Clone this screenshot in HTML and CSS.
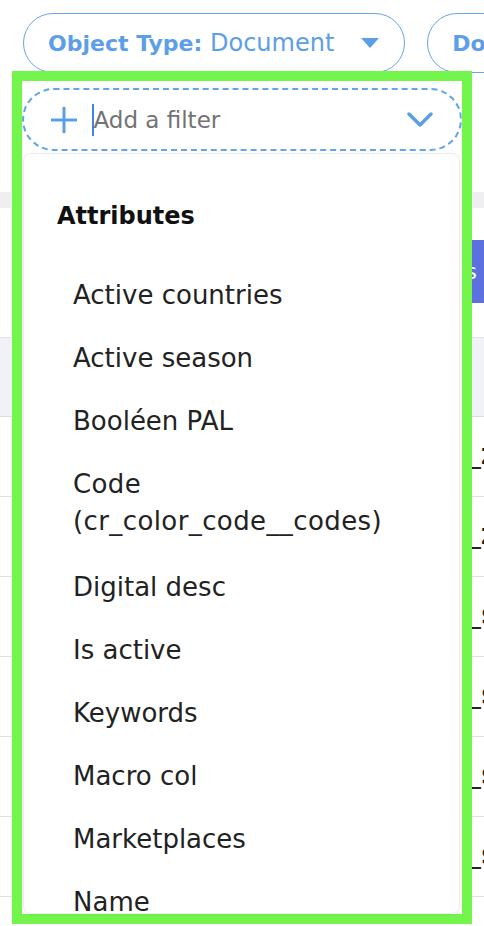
FILE: index.html
```html
<!DOCTYPE html>
<html lang="en">
<head>
  <meta charset="UTF-8">
  <title>Filters</title>
  <meta name="viewport" content="width=device-width, initial-scale=1.0">
  <link rel="stylesheet" href="styles.css">
</head>
<body>

<!-- Page behind the picker -->
<div class="page">
  <div class="filters">
    <div class="pill">
      <b>Object Type:</b>&nbsp;<span>Document</span>
      <span class="caret"></span>
    </div>
    <div class="pill">
      <b>Document status:</b>&nbsp;<span>All</span>
    </div>
  </div>

  <div class="band"></div>

  <div class="actions">
    <button class="action-btn">Columns</button>
  </div>

  <div class="table">
    <div class="table-head"></div>
    <div class="row"><span class="cell">_Z</span></div>
    <div class="row"><span class="cell">_Z</span></div>
    <div class="row"><span class="cell">_S</span></div>
    <div class="row"><span class="cell">_S</span></div>
    <div class="row"><span class="cell">_S</span></div>
    <div class="row"><span class="cell">_S</span></div>
  </div>
</div>

<!-- Add filter picker -->
<div class="picker">
  <div class="filter-input">
    <svg class="plus" width="28" height="28" viewBox="0 0 28 28">
      <path d="M14 1v26M1 14h26" stroke="#5b9de7" stroke-width="3" fill="none"/>
    </svg>
    <span class="cursor"></span>
    <span class="placeholder">Add a filter</span>
    <svg class="chevron" width="26" height="16" viewBox="0 0 26 16">
      <path d="M2 2l11 11L24 2" stroke="#5b9de7" stroke-width="3.4" fill="none" stroke-linecap="round" stroke-linejoin="round"/>
    </svg>
  </div>

  <div class="menu">
    <h3>Attributes</h3>
    <ul class="options">
      <li>Active countries</li>
      <li>Active season</li>
      <li>Booléen PAL</li>
      <li class="code">Code (cr_color_code__codes)</li>
      <li>Digital desc</li>
      <li>Is active</li>
      <li>Keywords</li>
      <li>Macro col</li>
      <li>Marketplaces</li>
      <li>Name</li>
      <li>Season</li>
    </ul>
  </div>
</div>

</body>
</html>
```

FILE: styles.css
```css
/* Base */
body {
  margin: 0;
  width: 484px;
  height: 926px;
  overflow: hidden;
  background: #fff;
  font-family: 'DejaVu Sans', sans-serif;
  color: #222;
  position: relative;
}

/* Filter pills */
.filters {
  display: flex;
  gap: 22px;
  padding: 13px 0 0 23px;
  white-space: nowrap;
}
.pill {
  flex-shrink: 0;
  box-sizing: border-box;
  height: 60px;
  border: 1.5px solid #66a5ea;
  border-radius: 30px;
  display: flex;
  align-items: center;
  padding: 0 25px 0 24px;
  color: #5c9ee7;
  font-size: 24px;
}
.pill b {
  font-size: 22px;
}
.caret {
  width: 0;
  height: 0;
  margin-left: 27px;
  border-left: 9px solid transparent;
  border-right: 9px solid transparent;
  border-top: 10px solid #5c9ee7;
}

/* Background content */
.band {
  height: 16px;
  margin-top: 119px;
  background: #efeff1;
}
.actions {
  display: flex;
  justify-content: flex-end;
  margin-top: 32px;
}
.action-btn {
  height: 63px;
  border: none;
  background: #5c70df;
  color: #fff;
  font-family: inherit;
  font-size: 22px;
  padding: 0 7px 0 20px;
}
.table {
  margin-top: 34px;
}
.table-head {
  height: 80px;
  box-sizing: border-box;
  background: #f1f2f7;
  border-top: 1px solid #e2e2e4;
  border-bottom: 1px solid #dcdcde;
}
.row {
  height: 80px;
  box-sizing: border-box;
  border-bottom: 1px solid #e0e0e2;
  display: flex;
  align-items: center;
  padding-left: 470px;
}
.cell {
  font-size: 22px;
  font-weight: bold;
  color: #222;
}

/* Picker */
.picker {
  position: absolute;
  left: 12px;
  top: 71px;
  width: 460px;
  height: 853px;
  box-sizing: border-box;
  border: 10px solid #74f54b;
  background: #fff;
  padding-top: 7px;
  display: flex;
  flex-direction: column;
}
.filter-input {
  flex-shrink: 0;
  box-sizing: border-box;
  height: 63px;
  border: 2px dashed #62a3ea;
  border-radius: 32px;
  display: flex;
  align-items: center;
  padding: 0 27px 0 26px;
}
.cursor {
  width: 1.5px;
  height: 32px;
  margin-left: 14px;
  background: #3d86e0;
}
.placeholder {
  flex: 1;
  font-size: 23px;
  color: #737373;
}
.menu {
  flex: 1;
  margin: 2px 2px 0 1px;
  border: 1px solid #ececee;
  border-radius: 8px;
  box-shadow: 0 1px 4px rgba(0, 0, 0, 0.05);
  overflow: hidden;
}
.menu h3 {
  margin: 44px 0 0 33px;
  font-size: 24px;
  line-height: 37px;
  color: #111;
}
.options {
  list-style: none;
  margin: 29px 0 0;
  padding: 0;
}
.options li {
  padding: 13px 30px 13px 49px;
  font-size: 26px;
  line-height: 37px;
  color: #222;
}
.options .code {
  padding-bottom: 16px;
  letter-spacing: 0.4px;
}
```
